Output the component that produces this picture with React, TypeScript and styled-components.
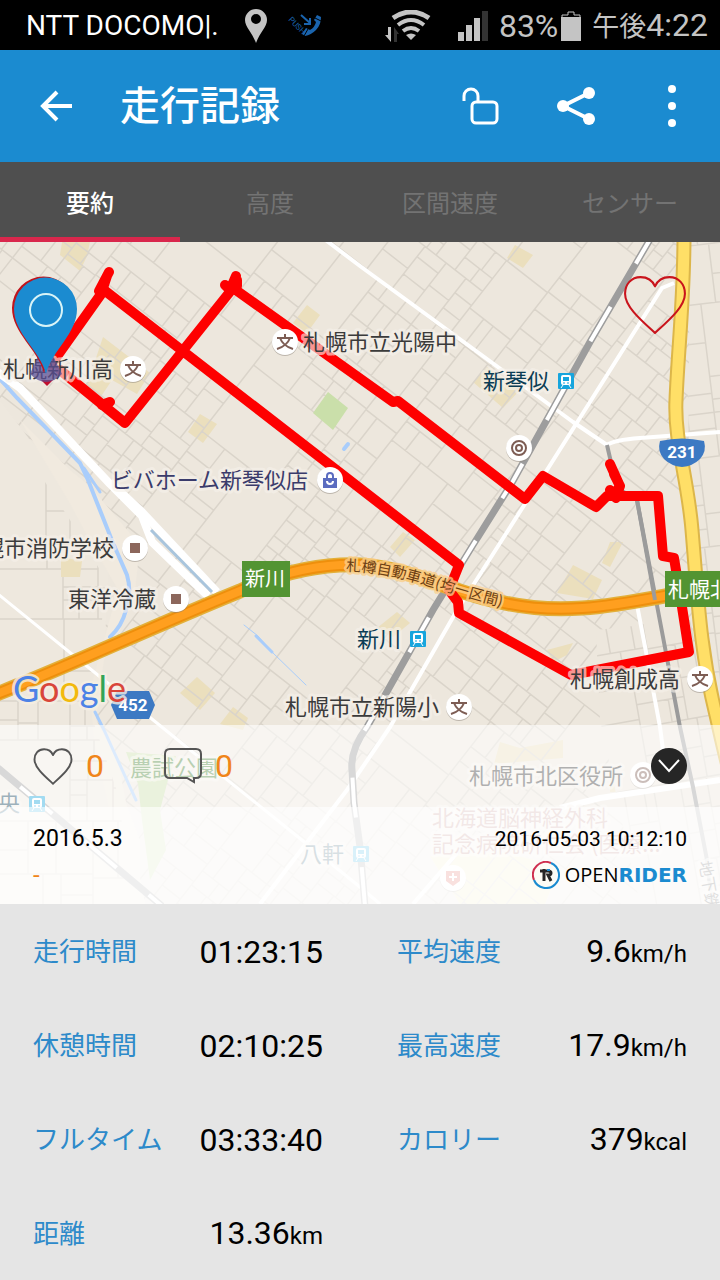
import React from 'react';
import styled, { createGlobalStyle } from 'styled-components';

const GlobalStyle = createGlobalStyle`
  *, *::before, *::after { box-sizing: border-box; }
  body { margin: 0; background: #e5e5e5; }
  button { border: 0; padding: 0; margin: 0; background: none; font: inherit; color: inherit; cursor: pointer; }
  svg { display: block; }
`;

const blue = '#1b8bd0';

const Screen = styled.div`
  min-height: 100vh;
  display: flex;
  flex-direction: column;
  color: #000;
  font-family: Roboto, 'Noto Sans CJK JP', sans-serif;
`;

/* ---------- status bar ---------- */

const StatusBar = styled.header`
  height: 50px;
  padding: 2px 12px 0 26px;
  display: flex;
  align-items: center;
  justify-content: space-between;
  background: #000;
  color: #c4c4c4;
`;

const StatusGroup = styled.div<{ $gap: number }>`
  display: flex;
  align-items: center;
  gap: ${(p) => p.$gap}px;
  white-space: nowrap;
`;

const Carrier = styled.span`
  color: #fff;
  font-size: 28px;
  line-height: 32px;
`;

const StatusText = styled.span`
  font-size: 32px;
  line-height: 40px;
`;

const Meridiem = styled.span`
  font-size: 27px;
`;

/* ---------- app bar ---------- */

const AppBar = styled.div`
  height: 112px;
  display: flex;
  align-items: center;
  background: ${blue};
  color: #fff;
`;

const BarButton = styled.button<{ $width: number }>`
  width: ${(p) => p.$width}px;
  height: 112px;
  display: flex;
  align-items: center;
  justify-content: center;
`;

const Title = styled.h1`
  margin: 0;
  padding: 2px 0 0 8px;
  flex: 1;
  font-size: 40px;
  line-height: 48px;
  font-weight: 500;
`;

/* ---------- tabs ---------- */

const Tabs = styled.div`
  height: 80px;
  display: grid;
  grid-template-columns: repeat(4, 1fr);
  background: #4f4f4f;
`;

const Tab = styled.button<{ $active?: boolean }>`
  padding-top: 8px;
  border-bottom: 5px solid ${(p) => (p.$active ? '#d9274c' : 'transparent')};
  color: ${(p) => (p.$active ? '#fff' : '#737373')};
  font-size: 24px;
  line-height: 32px;
  font-weight: ${(p) => (p.$active ? 500 : 400)};
`;

/* ---------- map panel ---------- */

const MapPanel = styled.section`
  position: relative;
  min-height: 662px;
  display: flex;
  flex-direction: column;
  justify-content: flex-end;
  overflow: hidden;
  background: #ede7dd;
`;

const MapSvg = styled.svg`
  position: absolute;
  inset: 0;
  width: 100%;
  height: 100%;
  font-family: 'Noto Sans CJK JP', sans-serif;
`;

const FavouriteButton = styled.button`
  position: absolute;
  top: 33px;
  right: 33px;
`;

const SocialBand = styled.div`
  position: relative;
  height: 82px;
  padding: 0 33px;
  display: flex;
  align-items: center;
  background: rgba(255, 255, 255, 0.6);
`;

const Counter = styled.button`
  width: 131px;
  display: flex;
  align-items: center;
  gap: 13px;
  color: #f08519;
  font-size: 32px;
  line-height: 40px;
`;

const CollapseButton = styled.button`
  width: 36px;
  height: 36px;
  margin-left: auto;
  display: flex;
  align-items: center;
  justify-content: center;
  border-radius: 50%;
  background: #262626;
`;

const InfoBand = styled.div`
  position: relative;
  padding: 18px 33px 15px;
  display: grid;
  gap: 8px;
  background: rgba(255, 255, 255, 0.84);
`;

const InfoRow = styled.div`
  height: 28px;
  display: flex;
  align-items: center;
  justify-content: space-between;
  line-height: 28px;
`;

const RideName = styled.span`
  font-size: 23px;
`;

const RideTime = styled.time`
  font-size: 21px;
`;

const Note = styled.span`
  color: #f08519;
  font-size: 24px;
`;

const Brand = styled.span`
  display: flex;
  align-items: center;
  font-family: 'Open Sans', sans-serif;
  font-size: 20px;
  line-height: 28px;

  svg { margin-right: 5px; }

  b {
    color: ${blue};
    font-family: 'DejaVu Sans', sans-serif;
  }
`;

/* ---------- statistics ---------- */

const Stats = styled.section`
  flex: 1;
  padding: 0 33px;
  display: grid;
  grid-template-columns: 1fr 1fr;
  column-gap: 74px;
  align-content: start;
  background: #e5e5e5;
`;

const StatList = styled.dl`
  margin: 0;
`;

const Stat = styled.div`
  height: 94px;
  padding-top: 2px;
  display: flex;
  align-items: center;
  justify-content: space-between;
  white-space: nowrap;
`;

const StatLabel = styled.dt`
  color: #2d8aca;
  font-size: 26px;
  line-height: 40px;
`;

const StatValue = styled.dd`
  margin: 0;
  font-size: 32px;
  line-height: 40px;
`;

const Unit = styled.span`
  font-size: 24px;
`;

/* ---------- street network ---------- */

function makeRandom(seed: number) {
  let s = seed;
  return () => {
    s = (s * 1103515245 + 12345) % 2147483648;
    return s / 2147483648;
  };
}

// Splits a block again and again; each cut is one street.
function streets(x: number, y: number, w: number, h: number, seed: number, stop = 0.25): string {
  const rnd = makeRandom(seed);
  const out: string[] = [];
  const split = (bx: number, by: number, bw: number, bh: number) => {
    const small = bw < 90 && bh < 90;
    if ((bw < 34 && bh < 34) || (small && rnd() < stop)) return;
    const t = 0.32 + rnd() * 0.36;
    if (bw > bh * (0.6 + rnd() * 0.8)) {
      const c = Math.round(bw * t);
      out.push(`M${bx + c} ${by}v${bh}`);
      split(bx, by, c, bh);
      split(bx + c, by, bw - c, bh);
    } else {
      const c = Math.round(bh * t);
      out.push(`M${bx} ${by + c}h${bw}`);
      split(bx, by, bw, c);
      split(bx, by + c, bw, bh - c);
    }
  };
  split(x, y, w, h);
  return out.join('');
}

const cityStreets = streets(-560, -560, 1120, 1120, 11, 0.16);
const westStreets = streets(0, 470, 160, 440, 5);
const eastStreets = streets(640, 200, 160, 720, 8);
const southStreets = streets(560, 580, 180, 340, 21);

const blocks = [
  '62,242 90,242 87,256 80,271 60,255',
  '103,337 150,373 137,394 112,380 100,398 86,388',
  '200,414 217,424 203,443 188,432',
  '307,305 320,315 307,333 293,323',
  '515,245 533,255 523,268 507,258',
  '487,367 520,390 503,408 473,382',
  '61,557 82,561 80,577 61,577',
  '197,677 215,693 200,710 180,693',
  '233,707 248,718 243,730 220,724',
  '403,532 415,540 400,557 390,547',
  '610,542 623,542 610,567 602,563',
  '573,565 602,580 593,599 557,593',
  '397,612 410,623 393,637 377,628',
  '547,650 573,643 567,655 553,662',
  '500,742 520,748 563,740 563,758 494,764',
  '0,755 25,757 25,772 0,772',
  '690,662 720,658 720,680 690,676',
  '610,776 622,776 622,792 610,792',
];

const highway = 'M-6 695C60 670 140 632 240 591C290 568 330 564 360 565C410 568 450 592 500 602C560 616 610 606 670 595';
const coastRoad = 'M684 236C684 300 678 350 676 400C674 440 688 480 692 530C698 600 700 650 716 715C724 750 730 780 740 800';
const railway = 'M652 236L590 342L513 481L473 545L433 610L367 727Q350 750 352 770L354 803L360 847L365 906';
const riverside = 'M0 379L17 398L80 463L88 480L113 543L127 575Q132 592 126 610Q122 626 110 637';
const loop =
  'M50 366L104 290L459 565L449 590L458 602L459 613L571 675L689 652L682 607L674 558L663 556L658 496L607 496L596 507L543 476L525 499L398 401L393 402L233 288L125 423L60 370';

interface LabelProps { x: number; y: number; fill?: string; end?: boolean; size?: number; children: React.ReactNode }

const Label = ({ x, y, fill = '#3b3b3b', end, size = 22, children }: LabelProps) => (
  <text
    x={x} y={y} fill={fill} fontSize={size} textAnchor={end ? 'end' : 'start'}
    stroke="#f6f1ea" strokeOpacity="0.65" strokeWidth="6" strokeLinejoin="round" paintOrder="stroke"
  >
    {children}
  </text>
);

type PoiKind = 'school' | 'shop' | 'place' | 'office' | 'hospital';

const Poi = ({ x, y, kind }: { x: number; y: number; kind: PoiKind }) => (
  <g transform={`translate(${x} ${y})`}>
    <circle cy="1" r="13" fill="#8d857c" opacity="0.5" />
    <circle r="13" fill="#fff" />
    {kind === 'school' && (
      <path d="M0-8V-4M-8-4H8M-5-4Q-2 4 8 7M5-4Q2 4-8 7" fill="none" stroke="#7d5d54" strokeWidth="2" />
    )}
    {kind === 'place' && <rect x="-5" y="-5" width="10" height="10" fill="#8c675c" />}
    {kind === 'office' && (
      <g fill="none" stroke="#7d5d54">
        <circle r="7" strokeWidth="2" />
        <circle r="3" strokeWidth="2" />
      </g>
    )}
    {kind === 'shop' && (
      <g>
        <path d="M-7-2H7V8H-7Z" fill="#5b6cc0" />
        <path d="M-3-2V-4a3 3 0 0 1 6 0v2" fill="none" stroke="#5b6cc0" strokeWidth="2" />
        <path d="M-3 1a3 3 0 0 0 6 0" fill="none" stroke="#fff" strokeWidth="2" />
      </g>
    )}
    {kind === 'hospital' && (
      <g>
        <path d="M-7-7H7V3L0 8L-7 3Z" fill="#d9453a" />
        <path d="M0-5V3M-4-1H4" stroke="#fff" strokeWidth="2" />
      </g>
    )}
  </g>
);

const Station = ({ x, y }: { x: number; y: number }) => (
  <g transform={`translate(${x} ${y})`}>
    <rect x="-8" y="-8" width="16" height="16" rx="1" fill="#17a5dd" />
    <rect x="-5" y="-6" width="10" height="10" rx="2" fill="#fff" />
    <rect x="-3" y="-4" width="6" height="4" fill="#17a5dd" />
    <path d="M-3 2h2M1 2h2" stroke="#17a5dd" />
    <path d="M-3 4L-5 7M3 4L5 7" stroke="#fff" />
  </g>
);

const Pin = 'M46 374C40 350 14 334 14 309A31 31 0 0 1 77 309C77 334 52 350 46 374Z';

const RideMap = () => (
  <MapSvg viewBox="0 242 720 662" preserveAspectRatio="xMidYMid slice" role="img" aria-label="走行ルートの地図">
    <rect x="-400" y="0" width="1600" height="1200" fill="#ede7dd" />
    <g fill="#ebdfbd">
      {blocks.map((points) => <polygon key={points} points={points} />)}
    </g>
    <path d="M430 856L500 852L560 866L545 904H460Z" fill="#f2ecc2" />
    <g fill="none" stroke="#dad4ca" strokeWidth="1.5">
      <path d={cityStreets} transform="translate(360 570) rotate(38)" />
    </g>
    <path d="M0 400L30 440L72 480L110 545L105 640L90 700L110 760L140 840L140 904H0Z" fill="#eee8de" />
    <path d="M20 420L70 470L90 486L140 545L134 600L120 630L104 660L96 720L118 760L145 904H130L94 740L90 690L104 640L118 590L84 530L68 500Z" fill="#f1eadf" />
    <clipPath id="west"><path d="M0 440L24 450L70 520L106 580L100 640L86 700L120 800L128 904H0Z" /></clipPath>
    <path d={westStreets} clipPath="url(#west)" fill="none" stroke="#dad4ca" strokeWidth="1.5" />
    <path d="M690 236H1100V904H728L700 610L688 480Z" fill="#ede7dd" />
    <clipPath id="east"><path d="M690 236H1100V904H728L700 610L688 480Z" /></clipPath>
    <g clipPath="url(#east)">
      <path d={eastStreets} transform="rotate(-7 700 560)" fill="none" stroke="#dad4ca" strokeWidth="1.5" />
    </g>
    <path d="M596 630L690 620L720 740V904H640L600 720Z" fill="#ede7dd" />
    <clipPath id="south"><path d="M596 630L690 620L720 740V904H640L600 720Z" /></clipPath>
    <g clipPath="url(#south)">
      <path d={southStreets} transform="rotate(-10 650 740)" fill="none" stroke="#dad4ca" strokeWidth="1.5" />
    </g>
    <polygon points="61,557 82,561 80,577 61,577" fill="#ebdfbd" />

    <g fill="#cadfaa">
      <polygon points="328,392 348,408 333,430 313,413" />
      <path d="M126 752L176 756L168 780L160 810L166 850L150 880L142 820L138 784Z" />
    </g>

    {/* rivers */}
    <g fill="none" stroke="#a9cdfb" strokeLinecap="round">
      <path d={riverside} strokeWidth="4" />
      <path d="M84 468L100 492" strokeWidth="3" />
      <path d="M95 712L104 730L114 752L136 800" strokeWidth="3" />
      <path d="M244 625L258 636L272 652L306 685" strokeWidth="1" />
      <path d="M256 636L272 652" strokeWidth="3" />
      <path d="M344 449L348 444" strokeWidth="4" />
    </g>

    {/* white roads */}
    <g fill="none" stroke="#fff" strokeLinejoin="round">
      <path d="M-4 371L20 388L110 484L142 516L152 542L208 596" strokeWidth="8" />
      <path d="M110 482L142 512L217 592" strokeWidth="8" />
      <path d="M323 238L360 266L573 422L607 445Q614 440 640 438L720 432" strokeWidth="4" />
      <path d="M674 283L662 288L547 470L523 507L456 612L390 727L347 790L260 904" strokeWidth="4" />
      <path d="M-2 594L73 655M83 663L163 728L360 887L380 904" strokeWidth="3" />
      <path d="M637 605L647 657L660 727L663 750" strokeWidth="4" />
      <path d="M560 808L600 798L720 780" strokeWidth="6" />
      <path d="M457 853L413 904" strokeWidth="4" />
    </g>
    <path d="M151 530L212 592" stroke="#a9c5dd" strokeWidth="3" />
    <path d="M607 445L617 488L637 500L663 637L680 727L693 787L707 860L712 904" fill="none" stroke="#9b9b9b" strokeWidth="4" />

    {/* railways */}
    <g fill="none">
      <path d={railway} stroke="#9d9d9d" strokeWidth="7" />
      <path d={railway} stroke="#fff" strokeWidth="4" strokeDasharray="40 50" strokeDashoffset="8" />
      <path d="M-2 768L162 906" stroke="#9d9d9d" strokeWidth="7" />
      <path d="M-2 768L162 906" stroke="#fff" strokeWidth="4" strokeDasharray="42 42" strokeDashoffset="55" />
    </g>

    {/* highways */}
    <g fill="none">
      <path d={coastRoad} stroke="#dcb64a" strokeWidth="15" />
      <path d={coastRoad} stroke="#ffdf67" strokeWidth="11" />
      <path d={highway} stroke="#e3b03a" strokeWidth="15" />
      <path d={highway} stroke="#ee8f0c" strokeWidth="12" />
      <path d={highway} stroke="#ff9f1f" strokeWidth="8" />
      <path d="M637 500L655 600" stroke="#9b9b9b" strokeWidth="4" />
    </g>

    {/* recorded ride */}
    <g fill="none" stroke="#fe0000" strokeWidth="10" strokeLinejoin="round" strokeLinecap="round">
      <path d={loop} />
      <path d="M99 291L109 272M103 288L107 276M102 405L110 402M225 285L230 290L236 276M237 280V286M610 464L619 484M614 474L620 486L613 496L610 490M616 498L620 486" />
    </g>

    <path id="highway-name" d="M346 571C400 572 440 592 510 609" fill="none" />
    <text fontSize="15" fill="#6d3f14" stroke="#fbd08c" strokeOpacity="0.75" strokeWidth="5" strokeLinejoin="round" paintOrder="stroke">
      <textPath href="#highway-name">札樽自動車道(均一区間)</textPath>
    </text>

    <Label x={3} y={377}>札幌新川高</Label>
    <Poi x={133} y={369} kind="school" />
    <Label x={303} y={350}>札幌市立光陽中</Label>
    <Poi x={285} y={342} kind="school" />
    <Label x={483} y={389} fill="#0b3d55">新琴似</Label>
    <Station x={566} y={381} />
    <Poi x={519} y={448} kind="office" />
    <Label x={308} y={488} fill="#3a3b6b" end>ビバホーム新琴似店</Label>
    <Poi x={330} y={480} kind="shop" />
    <Label x={114} y={556} end>札幌市消防学校</Label>
    <Poi x={135} y={548} kind="place" />
    <Label x={68} y={607}>東洋冷蔵</Label>
    <Poi x={176} y={599} kind="place" />
    <Label x={357} y={647} fill="#0b3d55">新川</Label>
    <Station x={418} y={639} />
    <Label x={285} y={715}>札幌市立新陽小</Label>
    <Poi x={459} y={707} kind="school" />
    <Label x={570} y={687}>札幌創成高</Label>
    <Poi x={700} y={679} kind="school" />
    <Label x={130} y={776} fill="#4f8a3f">農試公園</Label>
    <Label x={469} y={784}>札幌市北区役所</Label>
    <Poi x={643} y={775} kind="office" />
    <Label x={432} y={826} fill="#b0706a">北海道脳神経外科</Label>
    <Label x={432} y={852} fill="#b0706a">記念病院研仁会 (医療...</Label>
    <Poi x={453} y={878} kind="hospital" />
    <Label x={300} y={862} fill="#0b3d55">八軒</Label>
    <Station x={361} y={854} />
    <Label x={20} y={811} fill="#0b3d55" end>中央</Label>
    <Station x={37} y={804} />
    <g transform="rotate(80 699 862)">
      <Label x={699} y={862} size={16}>地下鉄</Label>
    </g>

    <rect x="242" y="561" width="48" height="36" fill="#539432" />
    <text x="245" y="586" fontSize="20" fill="#fff">新川</text>
    <rect x="665" y="571" width="70" height="36" fill="#539432" />
    <text x="668" y="597" fontSize="21" fill="#fff">札幌北</text>

    <g fontFamily="Roboto, sans-serif" fontSize="17" fontWeight="700" textAnchor="middle" fill="#fff">
      <path d="M660 441Q682 436 704 441Q707 451 700 459Q693 466 682 467Q671 466 664 459Q657 451 660 441Z" fill="#3c79c3" />
      <text x="682" y="458">231</text>
      <path d="M117 691H149L155 705L149 719H117L111 705Z" fill="#3c79c3" />
      <text x="133" y="711">452</text>
    </g>

    <text
      x="13" y="702" fontFamily="Lato, sans-serif" fontSize="36" fontWeight="400" strokeLinejoin="round"
      stroke="#f6efe3" strokeOpacity="0.8" strokeWidth="5" paintOrder="stroke"
    >
      <tspan fill="#4c82e6">G</tspan><tspan fill="#d9453a">o</tspan><tspan fill="#f2b90c">o</tspan><tspan fill="#4c82e6">g</tspan><tspan fill="#33a457">l</tspan><tspan fill="#d9453a">e</tspan>
    </text>

    {/* finish marker under start marker */}
    <path d="M41 380h12l-6 6Z" fill="#c01030" />
    <path d="M45 340L62 374Q46 390 30 374Z" fill="#5b4f94" opacity="0.75" />
    <path d={Pin} fill="#c0141c" transform="translate(-2 -1)" />
    <path d={Pin} fill={blue} />
    <circle cx="46" cy="310" r="16" fill="none" stroke="#d9f4f7" strokeWidth="2" />
  </MapSvg>
);

/* ---------- icons ---------- */

const LocationIcon = () => (
  <svg width="22" height="34" viewBox="0 0 22 34" aria-hidden="true">
    <path fillRule="evenodd" fill="#c4c4c4" d="M11 0A11 11 0 0 0 0 11C0 18 7 23 11 34C15 23 22 18 22 11A11 11 0 0 0 11 0ZM11 5a5 5 0 1 1 0 10a5 5 0 0 1 0-10Z" />
  </svg>
);

const PushCallIcon = () => (
  <svg width="34" height="24" viewBox="0 0 34 24" aria-hidden="true">
    <path d="M14 20L18 14L22 16Q27 13 28 8L26 6L29 1L33 3Q33 11 28 16Q23 21 17 22Z" fill="#1a64ae" />
    <path d="M13 1L22 9M22 4V10H16" stroke="#1a64ae" strokeWidth="2" fill="none" />
    <path d="M16 22L20 15M27 4L33 7" stroke="#000" />
    <text x="0" y="6" transform="rotate(46 0 6)" fontSize="8" fill="#1a64ae">PUSH</text>
  </svg>
);

const WifiIcon = () => (
  <svg width="47" height="32" viewBox="0 0 47 32" aria-hidden="true">
    <g fill="none" stroke="#c4c4c4" strokeWidth="5">
      <path d="M8 8Q26-4 44 8" />
      <path d="M13 15Q26 5 39 15" strokeWidth="4" />
      <path d="M18 21Q26 15 34 21" strokeWidth="4" />
    </g>
    <path d="M26 30L21 25Q26 22 31 25Z" fill="#c4c4c4" />
    <path d="M3 17H6V32L0 25H3Z" fill="#c4c4c4" />
    <path d="M9 32V17L14 24H12V32Z" fill="#333" />
  </svg>
);

const SignalIcon = () => (
  <svg width="30" height="30" viewBox="0 0 30 30" aria-hidden="true">
    <path d="M0 21H6V30H0ZM8 14H14V30H8ZM16 7H22V30H16Z" fill="#c4c4c4" />
    <path d="M24 0H30V30H24Z" fill="#333" />
  </svg>
);

const BatteryIcon = () => (
  <svg width="20" height="30" viewBox="0 0 20 30" aria-hidden="true">
    <path d="M0 6H20V30H0Z" fill="#c4c4c4" />
    <path d="M1 6V4H7V1H13V4H19V6" fill="none" stroke="#c4c4c4" />
  </svg>
);

const BackIcon = () => (
  <svg width="32" height="32" viewBox="0 0 32 32" fill="none" stroke="#fff" strokeWidth="4" aria-hidden="true">
    <path d="M32 16H3M17 2L3 16L17 30" />
  </svg>
);

const UnlockIcon = () => (
  <svg width="38" height="38" viewBox="0 0 38 38" fill="none" stroke="#fff" strokeWidth="3" aria-hidden="true">
    <path d="M3 14V9a7 7 0 0 1 14 0v6" />
    <rect x="11" y="15" width="25" height="21" rx="4" />
  </svg>
);

const ShareIcon = () => (
  <svg width="38" height="38" viewBox="0 0 38 38" fill="#fff" aria-hidden="true">
    <path d="M32 6L6 19L32 32" fill="none" stroke="#fff" strokeWidth="4" />
    <circle cx="32" cy="6" r="6" /><circle cx="6" cy="19" r="6" /><circle cx="32" cy="32" r="6" />
  </svg>
);

const MoreIcon = () => (
  <svg width="8" height="42" viewBox="0 0 8 42" fill="#fff" aria-hidden="true">
    <circle cx="4" cy="4" r="4" /><circle cx="4" cy="21" r="4" /><circle cx="4" cy="38" r="4" />
  </svg>
);

const HeartIcon = ({ width, height, color, stroke }: { width: number; height: number; color: string; stroke: number }) => (
  <svg width={width} height={height} viewBox="0 0 62 58" fill="none" stroke={color} strokeWidth={stroke} strokeLinejoin="round" aria-hidden="true">
    <path d="M31 11C28 4 22 2 17 2C8 2 2 9 2 18C2 31 19 45 31 56C43 45 60 31 60 18C60 9 54 2 45 2C40 2 34 4 31 11Z" />
  </svg>
);

const CommentIcon = () => (
  <svg width="38" height="36" viewBox="0 0 38 36" fill="none" stroke="#555" strokeWidth="2" aria-hidden="true">
    <path d="M6 1H32Q37 1 37 6V25Q37 30 32 30H30V34L23 30H6Q1 30 1 25V6Q1 1 6 1Z" />
  </svg>
);

const RiderLogo = () => (
  <svg width="28" height="28" viewBox="0 0 28 28" fill="none" aria-hidden="true">
    <path d="M2 19A13 13 0 0 1 19 2" stroke="#cf2f4e" strokeWidth="2" />
    <path d="M19 2A13 13 0 1 1 2 19" stroke={blue} strokeWidth="2" />
    <path d="M8 10H12" stroke="#262626" strokeWidth="3" />
    <path d="M12 8V20" stroke="#262626" strokeWidth="3" />
    <path d="M12 10H16Q19 10 19 12Q19 14 16 14L19 20" stroke="#262626" strokeWidth="3" />
    <path d="M15 9H18" stroke={blue} strokeWidth="2" />
  </svg>
);

/* ---------- data ---------- */

interface StatItem { label: string; value: string; unit?: string }

const leftStats: StatItem[] = [
  { label: '走行時間', value: '01:23:15' },
  { label: '休憩時間', value: '02:10:25' },
  { label: 'フルタイム', value: '03:33:40' },
  { label: '距離', value: '13.36', unit: 'km' },
];

const rightStats: StatItem[] = [
  { label: '平均速度', value: '9.6', unit: 'km/h' },
  { label: '最高速度', value: '17.9', unit: 'km/h' },
  { label: 'カロリー', value: '379', unit: 'kcal' },
];

const tabNames = ['要約', '高度', '区間速度', 'センサー'];

const StatColumn = ({ items }: { items: StatItem[] }) => (
  <StatList>
    {items.map((s) => (
      <Stat key={s.label}>
        <StatLabel>{s.label}</StatLabel>
        <StatValue>{s.value}{s.unit && <Unit>{s.unit}</Unit>}</StatValue>
      </Stat>
    ))}
  </StatList>
);

export default function App() {
  return (
    <>
      <GlobalStyle />
      <Screen>
        <StatusBar>
          <StatusGroup $gap={26}>
            <Carrier>NTT DOCOMO|.</Carrier>
            <StatusGroup $gap={21}>
              <LocationIcon />
              <PushCallIcon />
            </StatusGroup>
          </StatusGroup>
          <StatusGroup $gap={11}>
            <StatusGroup $gap={26}>
              <WifiIcon />
              <SignalIcon />
            </StatusGroup>
            <StatusGroup $gap={3}>
              <StatusText>83%</StatusText>
              <BatteryIcon />
            </StatusGroup>
            <StatusText><Meridiem>午後</Meridiem>4:22</StatusText>
          </StatusGroup>
        </StatusBar>

        <AppBar>
          <BarButton $width={112} aria-label="戻る"><BackIcon /></BarButton>
          <Title>走行記録</Title>
          <BarButton $width={96} aria-label="公開設定"><UnlockIcon /></BarButton>
          <BarButton $width={96} aria-label="共有"><ShareIcon /></BarButton>
          <BarButton $width={96} aria-label="メニュー"><MoreIcon /></BarButton>
        </AppBar>

        <Tabs role="tablist">
          {tabNames.map((name, i) => (
            <Tab key={name} role="tab" aria-selected={i === 0} $active={i === 0}>{name}</Tab>
          ))}
        </Tabs>

        <MapPanel>
          <RideMap />
          <FavouriteButton aria-label="お気に入り">
            <HeartIcon width={64} height={60} color="#c9141c" stroke={2} />
          </FavouriteButton>
          <SocialBand>
            <Counter aria-label="いいね 0"><HeartIcon width={40} height={37} color="#555" stroke={3} />0</Counter>
            <Counter aria-label="コメント 0"><CommentIcon />0</Counter>
            <CollapseButton aria-label="閉じる">
              <svg width="22" height="14" viewBox="0 0 22 14" fill="none" stroke="#fff" strokeWidth="2" aria-hidden="true">
                <path d="M1 1L11 12L21 1" />
              </svg>
            </CollapseButton>
          </SocialBand>
          <InfoBand>
            <InfoRow>
              <RideName>2016.5.3</RideName>
              <RideTime>2016-05-03 10:12:10</RideTime>
            </InfoRow>
            <InfoRow>
              <Note>-</Note>
              <Brand><RiderLogo />OPEN<b>RIDER</b></Brand>
            </InfoRow>
          </InfoBand>
        </MapPanel>

        <Stats>
          <StatColumn items={leftStats} />
          <StatColumn items={rightStats} />
        </Stats>
      </Screen>
    </>
  );
}
